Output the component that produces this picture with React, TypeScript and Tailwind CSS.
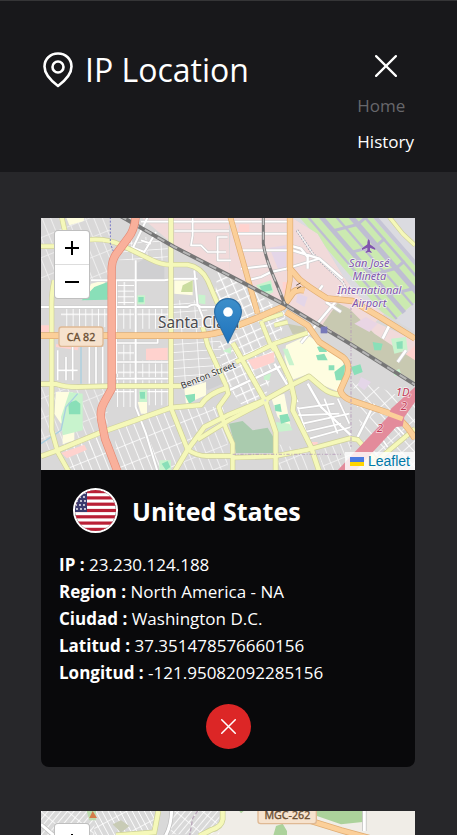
import React from "react";

type Road = { d: string; w: number };

const yellowRoads: Road[] = [
  { d: "M0 88H45 M145 68Q200 64 240 84L330 128Q365 146 400 143H440Q480 150 500 190L530 260", w: 12 },
  { d: "M62 0L72 45 M40 190Q30 230 32 280V640L50 705L84 765", w: 12 },
  { d: "M390 0V573L440 698Q470 718 500 717H575", w: 12 },
  { d: "M0 501H45Q70 510 110 510L210 507H420", w: 12 },
  { d: "M0 718L50 700L170 650L390 572L480 564Q500 530 560 512", w: 13 },
  { d: "M400 765L440 698L490 630L560 595L674 548L760 500L804 478L845 513Q870 534 910 534", w: 13 },
  { d: "M470 668L560 612L672 553 M485 330L500 385L555 505L562 530L533 570L555 635L575 680V765", w: 12 },
  { d: "M575 378L672 550L704 645V765 M695 378L748 490L760 545L755 580L810 690L835 765", w: 13 },
  { d: "M575 722L700 718L800 698L925 664L950 668L1000 725", w: 12 },
  { d: "M1122 635L985 750 M585 435L640 410L700 380L800 347", w: 12 },
  { d: "M660 312L685 375L700 400 M665 310L725 290 M700 325L740 315", w: 11 },
  { d: "M1045 0L1085 50L1122 85", w: 10 },
];

const orangeRoads: Road[] = [
  { d: "M0 356H470Q530 352 560 337L655 300Q700 280 725 270L755 228Q765 215 790 220", w: 16 },
  { d: "M568 0L615 165L650 290", w: 13 },
  { d: "M747 0V155L775 187Q800 208 858 244L935 252L1020 302L1122 365", w: 15 },
  { d: "M735 285L800 325L835 375L905 420Q930 440 918 475L898 520Q903 540 930 550L1050 590Q1090 610 1122 665", w: 15 },
  { d: "M747 150V190L735 255", w: 12 },
];

const whiteRoads: Road[] = [
  { d: "M320 0L270 105 M284 130V570L315 650L350 765 M0 270H250 M150 190H370L400 185H470", w: 6 },
  { d: "M455 0V55L450 85H480L500 105H555 M400 42H564 M560 60H530V130H570 M300 14H740", w: 5 },
  { d: "M345 45L310 105L270 90 M330 80L300 70 M225 190V470 M225 270H440Q460 255 480 270H530 M460 160L470 270 M470 262L485 300V340", w: 6 },
  { d: "M575 50H740 M620 190L660 180L690 165L735 155L835 125 M600 100H745 M600 155L690 145", w: 6 },
  { d: "M745 85L780 95L800 120V155 M755 100L835 125L905 185 M845 205L830 225 M900 235L780 378", w: 7 },
  { d: "M800 500L840 570L930 655 M950 660L1000 560 M564 520L725 445L740 490 M700 440L770 555", w: 7 },
  { d: "M1045 325L1025 365 M855 255L900 285 M1095 400L1070 435", w: 8 },
  { d: "M50 400V490M75 420V490M95 390V490M145 378V500M165 390V500M185 390V500M50 460H110 M225 378H350V365 M225 435H390M225 485H390", w: 5 },
  { d: "M770 575L880 560 M770 595L895 590 M785 620L925 590 M790 645L900 620 M805 665L930 630 M770 570L810 690 M850 545L890 650 M890 545L925 620", w: 5 },
  { d: "M1122 540L985 680 M1005 640L1040 690 M1050 610L1100 665 M970 700L1015 735", w: 5 },
];

function Strokes({ roads, edge, fill }: { roads: Road[]; edge: string; fill: string }) {
  return (
    <g fill="none" strokeLinejoin="round">
      {roads.map((r) => (
        <path key={"e" + r.d} d={r.d} stroke={edge} strokeWidth={r.w + 4} />
      ))}
      {roads.map((r) => (
        <path key={r.d} d={r.d} stroke={fill} strokeWidth={r.w} />
      ))}
    </g>
  );
}

function SantaClaraMap() {
  const rail = "M235 -5L400 90L564 175L735 265L935 385L1122 503";
  const branch = "M667 0V80Q672 115 690 160L732 262";
  const runways = [
    { y: 28, w: 7 },
    { y: 58, w: 14 },
    { y: 92, w: 7 },
    { y: 126, w: 16 },
    { y: 156, w: 8 },
  ];
  const crossings = [-60, 20, 105, 190, 280, 360];
  return (
    <svg
      className="block h-full w-full"
      viewBox="0 3 1122 756"
      preserveAspectRatio="xMidYMid slice"
      role="img"
      aria-label="Map of Santa Clara"
      fontFamily="'Noto Sans', sans-serif"
    >
      <defs>
        <pattern id="blocks" width="19" height="58" patternUnits="userSpaceOnUse">
          <path d="M0 0V58M0 1H19" stroke="#fff" strokeWidth="5" />
        </pattern>
        <pattern id="rows" width="62" height="17" patternUnits="userSpaceOnUse">
          <path d="M1 0V17M0 0H62" stroke="#fff" strokeWidth="5" />
        </pattern>
        <pattern id="wide" width="44" height="24" patternUnits="userSpaceOnUse" patternTransform="rotate(-4)">
          <path d="M0 0V24M0 0H44" stroke="#fff" strokeWidth="4" />
        </pattern>
        <pattern id="tilt" width="24" height="56" patternUnits="userSpaceOnUse" patternTransform="rotate(-22)">
          <path d="M0 0V56M0 0H24" stroke="#fff" strokeWidth="5" />
        </pattern>
        <pattern id="town" width="26" height="26" patternUnits="userSpaceOnUse" patternTransform="rotate(-24)">
          <path d="M0 0V26M0 0H26" stroke="#fff" strokeWidth="7" />
        </pattern>
        <pattern id="diag" width="30" height="48" patternUnits="userSpaceOnUse" patternTransform="rotate(-42)">
          <path d="M0 0V48M0 0H30" stroke="#fff" strokeWidth="5" />
        </pattern>
        <clipPath id="field">
          <path d="M750 0L830 50L905 175L950 235L1030 290L1122 345V0Z" />
        </clipPath>
      </defs>
      <rect width="1122" height="765" fill="#d9d8d8" />
      <path d="M0 0H210V190H0Z M0 510H200V700H0Z" fill="url(#tilt)" opacity=".65" />
      <path d="M225 275H385V335H225Z M225 378H284V500H225Z M284 430H390V500H284Z M60 275H200V330H60Z M220 515H284V570H220Z M320 515H390V565H320Z" fill="url(#blocks)" />
      <path d="M225 195H284V270H225Z" fill="url(#rows)" />
      <path d="M395 250H485L540 370V500H395Z M235 60H380V130H235Z" fill="url(#wide)" />
      <path d="M220 640L390 575L440 700L400 765H230Z M60 700L190 655L220 765H80Z M395 570H560L440 695Z" fill="url(#tilt)" />
      <path d="M530 165L650 230L735 290L700 430L672 550L610 575L555 500L530 380L600 340L520 250Z" fill="url(#town)" />
      <path d="M705 680L800 700V765H705Z M440 700L560 620V765H410Z M830 700L930 670V765H850Z" fill="url(#tilt)" opacity=".75" />
      <path d="M930 470L1122 560V765H1000L960 640Z" fill="url(#diag)" />

      <g fill="#f1dada">
        <path d="M300 0H564V170L400 85Z M570 0H750L830 50L905 175L950 235L1030 290L930 385L740 265L564 170Z" />
        <path d="M925 280L1122 370V440L1000 350Z" />
      </g>
      <g fill="#ffd2ce">
        <path d="M315 395L380 392V430H315Z M45 382H115L110 400L45 390Z M60 708L130 683L138 698L78 724Z M595 22H625V50H590Z M1075 435L1122 385V465Z M0 325H40V345H0Z M620 430L700 405V435L640 458Z M725 195H745L740 240L725 225Z M805 675H830V690H805Z" />
      </g>
      <path d="M685 92L735 85V155L715 165Z M770 230L800 240L790 270L765 255Z M960 480L990 495L970 520L950 505Z M840 85L850 100Z" fill="#e4d6e8" />
      <path d="M890 258L925 275L1000 350L1122 430V495L935 380L845 322Z" fill="#c8c9b1" />
      <path d="M940 320L975 300L1010 320L985 345Z" fill="#e9d5e4" />
      <path d="M285 140V190H370V150L310 125Z M480 490L540 470L545 500L500 520Z" fill="#cfcfd1" />
      <path d="M75 0H130L128 12L85 25Z M150 200L190 190L200 240L130 250Z M400 190H455V235L400 230Z M430 515L495 495V535L435 560Z M735 385L800 355L905 425L915 490L895 525L845 505L804 470L750 490L730 420Z M690 540L730 530L750 635L710 600Z M45 525H95V575L60 620L40 590Z M65 650L100 640V670L65 682Z M290 555H318V590H300Z" fill="#fefde0" />
      <g fill="#c8f3cd">
        <path d="M85 525L125 530V640L65 655L60 600Z M288 235H312V262H288Z M465 232L493 235V262L470 258Z M295 518H318V555H295Z M645 205L690 190L697 225L670 240Z M725 395H740L760 445H745Z M705 615L745 620L755 640L710 645Z M355 730H390V765H355Z M1050 365L1095 360L1100 400L1060 410Z M670 465L690 470L685 490L668 488Z M545 402L570 390V410Z M1055 465L1075 455L1080 470L1062 478Z" />
      </g>
      <g fill="#89dfb8">
        <path d="M160 210L200 195V248L122 250Z M292 240H308V256H292Z M82 558L105 550L118 560V592H84Z M432 535L462 530V550L445 560Z M655 208L688 200L694 220L665 225Z M828 390L850 385L858 405L835 405Z M825 415L850 410L860 430L830 430Z M880 465L912 440L910 490L885 490Z M930 450L958 442L965 465L940 475Z M700 565L718 560L722 585L703 582Z M715 595L740 590L748 612L720 620Z M863 445H880V460H863Z M995 375L1025 380L1020 400H1000Z M1066 375L1085 372V395H1068Z M362 740L380 732L388 750L375 760Z M296 525H312V545H298Z" />
      </g>
      <path d="M564 620L605 612L635 640L680 632L697 660V708H585L575 660Z" fill="#aacbae" />
      <path d="M425 205L455 190V225H420Z" fill="#cbdda0" />
      <path d="M740 320L790 330L795 345L755 352Z" fill="#c8c9b1" />
      <path d="M120 378V500 M110 530L75 570L60 640L0 680" fill="none" stroke="#a9cfe0" strokeWidth="4" />

      <path d="M750 0L830 50L905 175L950 235L1030 290L1122 345V0Z" fill="#dbdbe0" />
      <g clipPath="url(#field)">
        <g transform="translate(764 0) rotate(49)">
          <rect x="-200" y="-174" width="628" height="166" rx="20" fill="#cbeab0" />
          {runways.map((r) => (
            <rect key={r.y} x="-200" y={-r.y - r.w / 2} width="630" height={r.w} fill="#bfbed2" />
          ))}
          {crossings.map((x) => (
            <path key={x} d={`M${x} -58L${x + 34} -126V-160`} fill="none" stroke="#bfbed2" strokeWidth="9" />
          ))}
          <rect x="-200" y="-186" width="700" height="12" fill="#c6c5d6" />
        </g>
      </g>
      <path d="M768 40L815 110L905 195L925 235" fill="none" stroke="#9fa0ac" strokeWidth="8" strokeDasharray="5 4" />
      <path d="M768 40L815 110L905 195L925 235" fill="none" stroke="#f4f4f4" strokeWidth="4" />

      <Strokes roads={whiteRoads} edge="#d0cfcf" fill="#fff" />
      <Strokes roads={yellowRoads} edge="#cfd09b" fill="#f5f8b9" />
      <Strokes roads={orangeRoads} edge="#e1ad72" fill="#fbcf99" />
      <circle cx="673" cy="550" r="7" fill="#dcdcdc" stroke="#f5f8b9" strokeWidth="7" />
      <path d="M766 205L778 198M768 215L780 208" stroke="#655443" strokeWidth="3" />
      <path d="M930 270V690 M575 712H900" fill="none" stroke="#b49ab9" strokeWidth="4" strokeDasharray="10 5 3 5" opacity=".65" />
      <path d="M208 0V80L218 105" fill="none" stroke="#7475c5" strokeWidth="3" strokeDasharray="6 5" />

      <path d={rail} fill="none" stroke="#777" strokeWidth="12" />
      <path d={rail} fill="none" stroke="#b7b7b7" strokeWidth="6" strokeDasharray="24 20" />
      <path d={branch} fill="none" stroke="#777" strokeWidth="9" />
      <path d={branch} fill="none" stroke="#c7c7c7" strokeWidth="4" strokeDasharray="24 20" />

      <Strokes roads={[{ d: "M284 0Q280 40 262 62L225 112Q212 130 212 160V515L190 555Q174 580 182 615L192 665L230 765", w: 21 }]} edge="#e58b76" fill="#f9b09b" />
      <path d="M1122 510L1050 575L1040 600L885 765H940L1065 630L1085 628L1090 600L1122 555Z" fill="#e38b9b" />
      <path d="M1020 582L1085 606" stroke="#fbcf99" strokeWidth="15" />
      <rect x="839" y="329" width="20" height="20" fill="#7779b8" />

      <rect x="54" y="330" width="132" height="58" rx="8" fill="#f6e2cd" stroke="#dfb994" strokeWidth="4" />
      <text x="120" y="371" textAnchor="middle" fontSize="32" fill="#6b5034" stroke="#6b5034">CA 82</text>
      <text x="351" y="332" fontSize="46" fill="#4b4b4f" stroke="#fff" strokeWidth="6" strokeOpacity=".65" paintOrder="stroke">Santa Clara</text>
      <text transform="translate(424 516) rotate(-22)" fontSize="27" fill="#333" stroke="#fff" strokeWidth="4" strokeOpacity=".6" paintOrder="stroke">Benton Street</text>
      <g fill="#8055ad" stroke="#fff" strokeWidth="5" strokeOpacity=".7" paintOrder="stroke" fontStyle="italic" fontSize="33" textAnchor="middle">
        <path transform="translate(983 87)" strokeWidth="1" d="M0 -21Q4 -18 4 -10V-5L20 7V12L4 5V13L9 18V21L0 18L-9 21V18L-4 13V5L-20 12V7L-4 -5V-10Q-4 -18 0 -21Z" />
        <text x="985" y="149">San José</text>
        <text x="985" y="190">Mineta</text>
        <text x="985" y="230">International</text>
        <text x="985" y="270">Airport</text>
      </g>
      <g fill="#c33c59" stroke="#fff" strokeWidth="4" strokeOpacity=".7" paintOrder="stroke" fontStyle="italic" fontSize="34">
        <text x="1064" y="538">1D,</text>
        <text x="1079" y="578">2</text>
        <text x="1007" y="646">2</text>
      </g>
    </svg>
  );
}

function NextMap() {
  return (
    <svg className="block h-full w-full" viewBox="0 0 1122 756" preserveAspectRatio="xMidYMid slice" role="img" aria-label="Map" fontFamily="'Noto Sans', sans-serif">
      <defs>
        <pattern id="hatch" width="15" height="52" patternUnits="userSpaceOnUse" patternTransform="rotate(40)">
          <path d="M0 0V52M0 0H15" stroke="#fff" strokeWidth="5" />
        </pattern>
        <pattern id="hatch2" width="16" height="60" patternUnits="userSpaceOnUse" patternTransform="rotate(-28)">
          <path d="M0 0V60M0 0H16" stroke="#fff" strokeWidth="5" />
        </pattern>
      </defs>
      <rect width="1122" height="756" fill="#f0ede7" />
      <path d="M0 0H545L530 60L450 80H0Z" fill="#d9d9d9" />
      <path d="M0 0H160V80H0Z M400 0H535V70H380Z" fill="url(#hatch)" />
      <path d="M160 0H350V80H160Z" fill="url(#hatch2)" />
      <path d="M215 40L240 28L265 45L240 65Z" fill="#c8cbb5" />
      <path d="M828 0H965V33L900 40L828 15Z M705 45L725 38L738 60V80H695Z M595 0H608L600 7Z" fill="#acd29b" />
      <path d="M137 0H165V28H145Z" fill="#bcdcae" />
      <path d="M155 0L168 21H145Z" fill="#d47b49" />
      <path d="M392 0Q390 50 370 80M970 0V60M0 40L40 75" fill="none" stroke="#bbb" strokeWidth="13" />
      <path d="M392 0Q390 50 370 80M970 0V60M0 40L40 75" fill="none" stroke="#fff" strokeWidth="9" />
      <path d="M352 0L340 64L225 73M545 0V25Q542 48 510 57L475 75" fill="none" stroke="#ccd096" strokeWidth="17" />
      <path d="M352 0L340 64L225 73M545 0V25Q542 48 510 57L475 75" fill="none" stroke="#f5f8b9" strokeWidth="13" />
      <path d="M470 0L455 22L445 80" fill="none" stroke="#b9a6ba" strokeWidth="4" strokeDasharray="12 6" />
      <path d="M810 30L900 58L1000 85" fill="none" stroke="#e1ad72" strokeWidth="19" />
      <path d="M810 30L900 58L1000 85" fill="none" stroke="#fbcf99" strokeWidth="14" />
      <rect x="651" y="-22" width="175" height="60" rx="8" fill="#f6e2cd" stroke="#dfb994" strokeWidth="4" />
      <text x="739" y="25" textAnchor="middle" fontSize="32" fill="#6b5034" stroke="#6b5034">MGC-262</text>
    </svg>
  );
}

function Cross({ className }: { className: string }) {
  return (
    <svg className={className} viewBox="0 0 20 20" fill="none" stroke="currentColor" strokeWidth="2" aria-hidden="true">
      <path d="M1 1L19 19M19 1L1 19" strokeLinecap="round" />
    </svg>
  );
}

function ZoomControl() {
  return (
    <div className="absolute left-[13px] top-3 flex w-9 flex-col overflow-hidden rounded border border-black/25 bg-white text-black">
      <button type="button" aria-label="Zoom in" className="flex h-[34px] items-center justify-center border-b border-[#ddd]">
        <svg className="size-[14px]" viewBox="0 0 14 14" stroke="currentColor" strokeWidth="2" aria-hidden="true">
          <path d="M0 7H14M7 0V14" />
        </svg>
      </button>
      <button type="button" aria-label="Zoom out" className="flex h-[33px] items-center justify-center">
        <svg className="size-[14px]" viewBox="0 0 14 14" stroke="currentColor" strokeWidth="2" aria-hidden="true">
          <path d="M0 7H14" />
        </svg>
      </button>
    </div>
  );
}

function Marker() {
  return (
    <svg className="absolute left-1/2 top-1/2 h-[46px] w-7 -translate-x-1/2 -translate-y-full" viewBox="0 0 25 41" aria-hidden="true">
      <defs>
        <linearGradient id="pin" x2="0" y2="1">
          <stop stopColor="#3d8fca" />
          <stop offset="1" stopColor="#1f73bd" />
        </linearGradient>
      </defs>
      <path d="M12.5 .5C5.7 .5 .5 5.8 .5 12.4C.5 15.2 1.6 18 2.8 20.3L12.5 40L22.2 20.3C23.4 18 24.5 15.2 24.5 12.4C24.5 5.8 19.3 .5 12.5 .5Z" fill="url(#pin)" stroke="#2b6da5" />
      <circle cx="12.5" cy="12.5" r="4.3" fill="#fff" />
    </svg>
  );
}

function UsFlag() {
  const stripes = [0, 1, 2, 3, 4, 5, 6];
  const stars = [0, 1, 2, 3, 4, 5, 6, 7, 8, 9, 10, 11, 12, 13, 14];
  return (
    <svg className="size-[45px] rounded-full border-2 border-white" viewBox="0 0 41 41" role="img" aria-label="Flag of the United States">
      <rect width="41" height="41" fill="#fff" />
      {stripes.map((i) => (
        <rect key={i} y={i * 6.3} width="41" height="3.2" fill="#b92036" />
      ))}
      <rect width="12" height="22" fill="#3c3b6e" />
      {stars.map((i) => (
        <circle key={i} cx={2 + (i % 3) * 4 - (Math.floor(i / 3) % 2)} cy={3 + Math.floor(i / 3) * 4} r=".9" fill="#fff" />
      ))}
    </svg>
  );
}

const details = [
  ["IP", "23.230.124.188"],
  ["Region", "North America - NA"],
  ["Ciudad", "Washington D.C."],
  ["Latitud", "37.351478576660156"],
  ["Longitud", "-121.95082092285156"],
];

export default function App() {
  return (
    <div className="h-screen overflow-hidden bg-zinc-800 font-['Open_Sans','Noto_Sans',sans-serif] text-[17px] leading-[27px] text-white">
      <header className="flex items-start justify-between border-t border-[#353537] bg-zinc-900 pb-3 pl-[41px] pr-[43px] pt-[46px]">
        <h1 className="flex items-center gap-[10px] text-[32px] leading-[45px]">
          <svg className="h-9 w-[34px]" viewBox="0 0 34 36" fill="none" stroke="currentColor" strokeWidth="2.6" aria-hidden="true">
            <path d="M17 1.5C9.2 1.5 3.5 7.3 3.5 14.5C3.5 22 11 29.500 17 34C23 29.500 30.500 22 30.500 14.500C30.500 7.300 24.800 1.500 17 1.500Z" strokeLinejoin="round" />
            <circle cx="17" cy="15" r="5.500" />
          </svg>
          IP Location
        </h1>
        <nav className="flex flex-col">
          <button type="button" aria-label="Close menu" className="mb-[3px] flex h-[38px] items-center justify-center">
            <Cross className="size-[22px]" />
          </button>
          <a href="#home" className="py-[5px] leading-[26px] text-[#67676b]">Home</a>
          <a href="#history" className="py-[5px] leading-[26px]">History</a>
        </nav>
      </header>

      <main className="flex flex-col gap-11 pl-[41px] pr-[42px] pt-[46px]">
        <article className="overflow-hidden rounded-b-lg bg-zinc-950">
          <div className="relative h-[252px]">
            <SantaClaraMap />
            <Marker />
            <ZoomControl />
            <a href="#leaflet" className="absolute bottom-0 right-0 flex items-center gap-1 bg-white/80 px-[5px] font-['Liberation_Sans',sans-serif] text-[14px] leading-[18px] text-[#0078a8]">
              <svg className="h-[9px] w-[14px]" viewBox="0 0 14 9" aria-hidden="true">
                <path fill="#4c7be1" d="M0 0h14v5H0z" />
                <path fill="#ffd500" d="M0 5h14v4H0z" />
              </svg>
              Leaflet
            </a>
          </div>
          <div className="p-[18px]">
            <div className="flex items-center gap-[14px] px-[14px]">
              <UsFlag />
              <h2 className="pt-[2px] text-[25px] font-bold leading-[43px]">United States</h2>
            </div>
            <ul className="pt-[18px]">
              {details.map(([label, value]) => (
                <li key={label}>
                  <b>{label} :</b> {value}
                </li>
              ))}
            </ul>
            <button type="button" aria-label="Delete" className="mx-auto mt-[18px] flex size-[45px] items-center justify-center rounded-full bg-[#dc2626]">
              <Cross className="size-[15px]" />
            </button>
          </div>
        </article>

        <article className="overflow-hidden rounded-b-lg bg-zinc-950">
          <div className="relative h-[252px]">
            <NextMap />
            <ZoomControl />
          </div>
        </article>
      </main>
    </div>
  );
}
